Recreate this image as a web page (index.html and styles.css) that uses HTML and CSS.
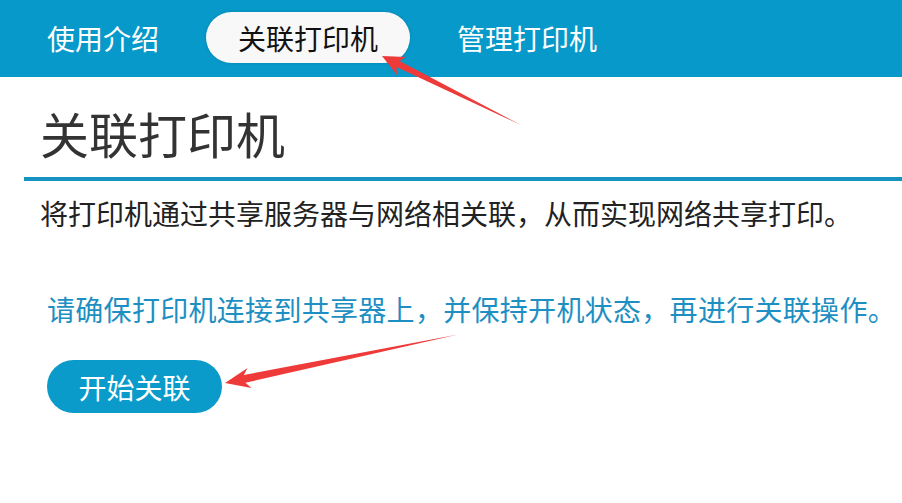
FILE: index.html
```html
<!DOCTYPE html>
<html lang="zh-CN">
<head>
<meta charset="utf-8">
<title>关联打印机</title>
<link rel="stylesheet" href="styles.css">
</head>
<body>
<nav class="nav">
  <a class="tab">使用介绍</a>
  <a class="tab tab-active">关联打印机</a>
  <a class="tab">管理打印机</a>
</nav>
<main class="content">
  <h1 class="title">关联打印机</h1>
  <p class="desc">将打印机通过共享服务器与网络相关联，从而实现网络共享打印。</p>
  <p class="notice">请确保打印机连接到共享器上，并保持开机状态，再进行关联操作。</p>
  <button class="btn">开始关联</button>
</main>
<svg class="annot" width="902" height="503" viewBox="0 0 902 503">
  <polygon class="arrow" points="382,56 406,57 399.6,61 521,125 396.5,67 397,75"/>
  <polygon class="arrow" points="225,383 247.5,368 243.8,375 458,334.5 245.4,382.8 251.5,388"/>
</svg>
</body>
</html>
```

FILE: styles.css
```css
* { box-sizing: border-box; }
html, body {
  margin: 0;
  padding: 0;
  background: #ffffff;
}
body {
  width: 902px;
  height: 503px;
  overflow: hidden;
  position: relative;
  font-family: "Noto Sans CJK SC", "Noto Sans", sans-serif;
}
.nav {
  height: 77px;
  background: #0799c9;
  display: flex;
  align-items: center;
  gap: 15px;
  padding: 0 0 2px 15px;
}
.tab {
  display: flex;
  align-items: center;
  justify-content: center;
  height: 51px;
  padding: 0 32px;
  font-size: 28px;
  color: #ffffff;
  line-height: 1;
  border-radius: 26px;
}
.tab-active {
  background: #f8f8f8;
  color: #111111;
  box-shadow: 0 0 3px rgba(0,0,0,0.15);
}
.content {
  margin-left: 24px;
  display: flex;
  flex-direction: column;
  align-items: flex-start;
}
.title {
  align-self: stretch;
  margin: 0;
  padding: 26px 0 14px 16px;
  font-size: 49px;
  font-weight: 400;
  line-height: 60px;
  color: #333333;
  border-bottom: 4px solid #1592bf;
}
.desc {
  margin: 14px 0 0 16px;
  font-size: 28px;
  line-height: 36px;
  color: #222222;
}
.notice {
  margin: 60px 0 0 23px;
  font-size: 28px;
  letter-spacing: 0.3px;
  line-height: 36px;
  color: #1e8fc2;
}
.btn {
  margin: 33px 0 0 23px;
  width: 175px;
  height: 53px;
  border: none;
  border-radius: 27px;
  background: #0b9bcb;
  color: #ffffff;
  font-family: inherit;
  font-size: 28px;
  line-height: 1;
  padding: 0;
}
.annot {
  position: absolute;
  left: 0;
  top: 0;
  pointer-events: none;
}
.arrow {
  fill: #ef3a3a;
}
```
